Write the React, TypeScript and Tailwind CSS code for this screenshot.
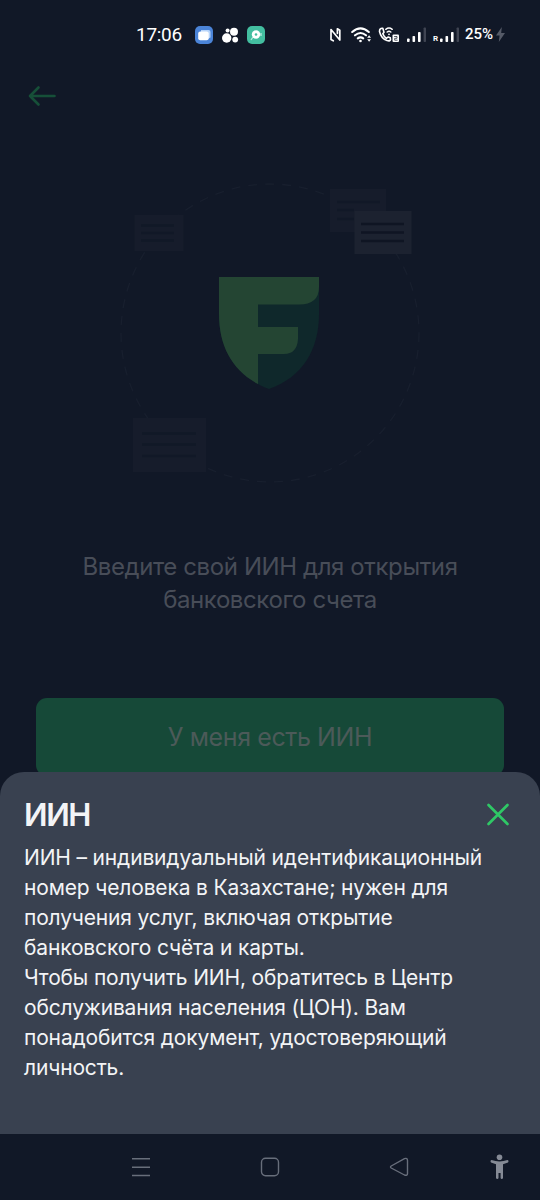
const bodyLines = [
  "ИИН – индивидуальный идентификационный",
  "номер человека в Казахстане; нужен для",
  "получения услуг, включая открытие",
  "банковского счёта и карты.",
  "Чтобы получить ИИН, обратитесь в Центр",
  "обслуживания населения (ЦОН). Вам",
  "понадобится документ, удостоверяющий",
  "личность.",
]

function SignalBars() {
  return (
    <svg width="20" height="16" viewBox="0 0 20 16" fill="#fff">
      <rect x="0" y="11.5" width="2.6" height="3.5" rx="0.8" />
      <rect x="5.5" y="9" width="2.6" height="6" rx="0.8" />
      <rect x="11" y="5" width="2.6" height="10" rx="0.8" />
      <rect x="16.6" y="0.5" width="2.4" height="14.5" rx="0.8" fill="#3f4452" />
    </svg>
  )
}

function StatusBar() {
  return (
    <div className="flex h-[68px] shrink-0 items-center pl-[136px] pt-px text-white">
      <span className="w-[59px] whitespace-nowrap pt-[2px] font-['Roboto'] text-[19px] tracking-[-0.3px]">17:06</span>
      <svg width="72" height="20" viewBox="0 0 72 20">
        <rect x="0" y="1" width="18" height="18" rx="5" fill="#4b84d8" />
        <path d="M6 5h7.500q2 0 2 2v5.500l-2 1H6z" fill="#b9d5fa" />
        <rect x="3.200" y="6.500" width="10.500" height="8.700" rx="2" fill="#fff" />
        <g fill="#fff">
          <circle cx="31.700" cy="13" r="4.700" />
          <circle cx="39" cy="6.800" r="4" />
          <circle cx="40.200" cy="14.600" r="2.900" />
          <circle cx="32.600" cy="5.400" r="2" />
        </g>
        <rect x="52" y="1" width="18" height="18" rx="5" fill="#43bea0" />
        <path d="M56 15l2-3M66 8v3" stroke="#b5eadd" strokeWidth="1.3" />
        <circle cx="61" cy="9.5" r="4.2" fill="#fff" />
        <circle cx="61" cy="9.5" r="1.3" fill="#43bea0" />
      </svg>
      <div className="ml-[63px] flex items-center">
        <svg width="11" height="16" viewBox="0 0 11 16" fill="none" stroke="#fff" strokeWidth="1.7" strokeLinejoin="round" strokeLinecap="round">
          <path d="M3.300 13.800L1 12.500V2.500L9.800 13V3.200L7.400 1.800V6.300" />
        </svg>
        <svg className="ml-[10px]" width="22" height="18" viewBox="0 0 22 18" fill="none" stroke="#fff" strokeWidth="2.100" strokeLinecap="round">
          <path d="M1.200 6q8.300-7.200 16.600 0M4 9.300q5.500-4.600 11 0M6.800 12.400q2.700-2.100 5.400 0" />
          <circle cx="9.500" cy="15" r="1.300" fill="#fff" stroke="none" />
          <path d="M16.200 11.800l1.900-2.600 1.900 2.600zM16.200 13.200l1.900 2.600 1.900-2.600z" fill="#fff" stroke="none" />
        </svg>
        <svg className="ml-[5px]" width="23" height="18" viewBox="0 0 23 18" fill="none" stroke="#fff" strokeWidth="1.6" strokeLinecap="round" strokeLinejoin="round">
          <path d="M4.800 2.300Q1.500 1.800 1.500 5.500Q3 12.300 9 14.600Q12 15.500 12.500 13.800L12.300 11.800L10 11L8.400 12.300Q5.800 10.500 4.800 7.800L6 6.200Z" />
          <path d="M7.800 3.300q3.200-2.400 6.400 0M9.200 6q1.800-1.300 3.600 0" strokeWidth="1.500" />
          <circle cx="11" cy="8.300" r="0.900" fill="#fff" stroke="none" />
          <rect x="14.500" y="8.500" width="6.500" height="7.500" rx="1" fill="#fff" stroke="none" />
          <path d="M16.500 10.500h2.500v1.800h-2.300v1.900h2.500" stroke="#111827" strokeWidth="0.700" />
        </svg>
        <span className="ml-[6px]">
          <SignalBars />
        </span>
        <span className="ml-[6px] mt-[9px] w-[7px] font-['Roboto'] text-[8px] font-bold leading-none">R</span>
        <SignalBars />
        <span className="ml-[5px] w-[31px] whitespace-nowrap font-['Roboto'] text-[15px] font-medium">25%</span>
        <svg width="9" height="15" viewBox="0 0 9 15" fill="#555a67">
          <path d="M5.800 0L0 8.500h3.600L2.800 15 9 6H5.200z" />
        </svg>
      </div>
    </div>
  )
}

function Illustration() {
  return (
    <svg className="mx-auto shrink-0" width="320" height="320" viewBox="110 174 320 320">
      <circle cx="270" cy="333" r="149" fill="none" stroke="#181f2e" strokeWidth="1.300" strokeDasharray="9 8" />
      <g fill="#161c2b">
        <rect x="134.500" y="215" width="49" height="36" />
        <rect x="330" y="189" width="56" height="43" />
        <rect x="133" y="418" width="73" height="54" />
      </g>
      <rect x="354.500" y="211" width="57" height="43" fill="#1c2230" />
      <g stroke="#111827" strokeWidth="2.400">
        <path d="M141 225.500h33M141 233h33M141 240.500h33" />
        <path d="M337 202h43M337 210h17M337 219h17" />
        <path d="M142 433.500h54M142 444.500h54M142 456h54" />
        <path d="M361 224h43M361 232.500h43M361 241h43" stroke="#0f1523" />
      </g>
      <path d="M219 277H319V314C319 349 303 377 269 389C235 376 219 349 219 314Z" fill="#0f282b" />
      <path d="M219 277H319V287Q319 304.500 299 304.500H258V327H298V339Q297 354 284 354H258V384C232 370 219 346 219 314Z" fill="#244533" />
    </svg>
  )
}

function InfoSheet() {
  return (
    <div className="absolute inset-x-0 bottom-[66px] h-[362px] rounded-t-[24px] bg-[#394150] px-6 pt-[25px] text-[#f3f4f6]">
      <div className="flex h-9 items-center justify-between">
        <h2 className="text-[31px] font-semibold leading-9 tracking-[-1.400px]">ИИН</h2>
        <button aria-label="Закрыть" className="mr-[6px]">
          <svg width="24" height="24" viewBox="0 0 24 24" fill="none" stroke="#2fc866" strokeWidth="2.700" strokeLinecap="round">
            <path d="M2.500 2l19 19M21.500 2l-19 19" />
          </svg>
        </button>
      </div>
      <div className="mt-[10px] text-[21px] leading-[30px] tracking-[-0.160px]">
        {bodyLines.map((line) => (
          <p key={line} className="whitespace-nowrap">
            {line}
          </p>
        ))}
      </div>
    </div>
  )
}

function NavigationBar() {
  return (
    <div className="absolute inset-x-0 bottom-0 flex h-[66px] items-center bg-[#111827] pl-[131px]">
      <svg width="20" height="20" viewBox="0 0 20 20" stroke="#686e7b" strokeWidth="1.600">
        <path d="M1 1.800h18M1 10.200h18M1 18.500h18" />
      </svg>
      <svg className="ml-[109px]" width="20" height="20" viewBox="0 0 20 20" fill="none" stroke="#686e7b" strokeWidth="1.400">
        <rect x="1.500" y="1.200" width="17" height="17.500" rx="4" />
      </svg>
      <svg className="ml-[109px]" width="20" height="20" viewBox="0 0 20 20" fill="none" stroke="#686e7b" strokeWidth="1.400" strokeLinejoin="round">
        <path d="M2.200 9L15.500 1.600Q18.500.8 18.500 3.500V16.500Q18.500 19 15.500 18L2.200 11Q.8 10 2.200 9Z" />
      </svg>
      <svg className="ml-[81px]" width="20" height="26" viewBox="0 0 20 26" fill="#858a95">
        <circle cx="9.500" cy="3.200" r="2.800" />
        <path d="M1.500 6.100Q9.500 9 17.500 6.100Q18.700 6.400 18.500 7.500L18 8.600L13 10.200V24Q12.800 25 11.800 25T10.600 24V19H8.500V24Q8.300 25 7.300 25T6 24V10.200L1 8.600L.5 7.500Q.4 6.400 1.500 6.100Z" />
      </svg>
    </div>
  )
}

export default function App() {
  return (
    <div className="relative flex h-[1200px] w-[540px] flex-col overflow-hidden bg-[#111827] font-['Inter','Noto_Sans',sans-serif]">
      <StatusBar />
      <div className="flex h-[106px] shrink-0 items-start pl-[28px] pt-[17px]">
        <svg width="28" height="22" viewBox="0 0 28 22" fill="none" stroke="#164f38" strokeWidth="2.600" strokeLinecap="round" strokeLinejoin="round">
          <path d="M26.500 11H2M10.500 2.500L2 11l8.500 8.500" />
        </svg>
      </div>
      <Illustration />
      <h1 className="mt-[56px] text-center text-[24px] leading-[33px] tracking-[-0.400px] text-[#484d58]">
        Введите свой ИИН для открытия
        <br />
        банковского счета
      </h1>
      <button className="mx-9 mt-[82px] h-[78px] shrink-0 rounded-[11px] bg-[#164938] pt-[2px] text-[25px] tracking-[-0.400px] text-[#4c5a59]">
        У меня есть ИИН
      </button>
      <InfoSheet />
      <NavigationBar />
    </div>
  )
}
